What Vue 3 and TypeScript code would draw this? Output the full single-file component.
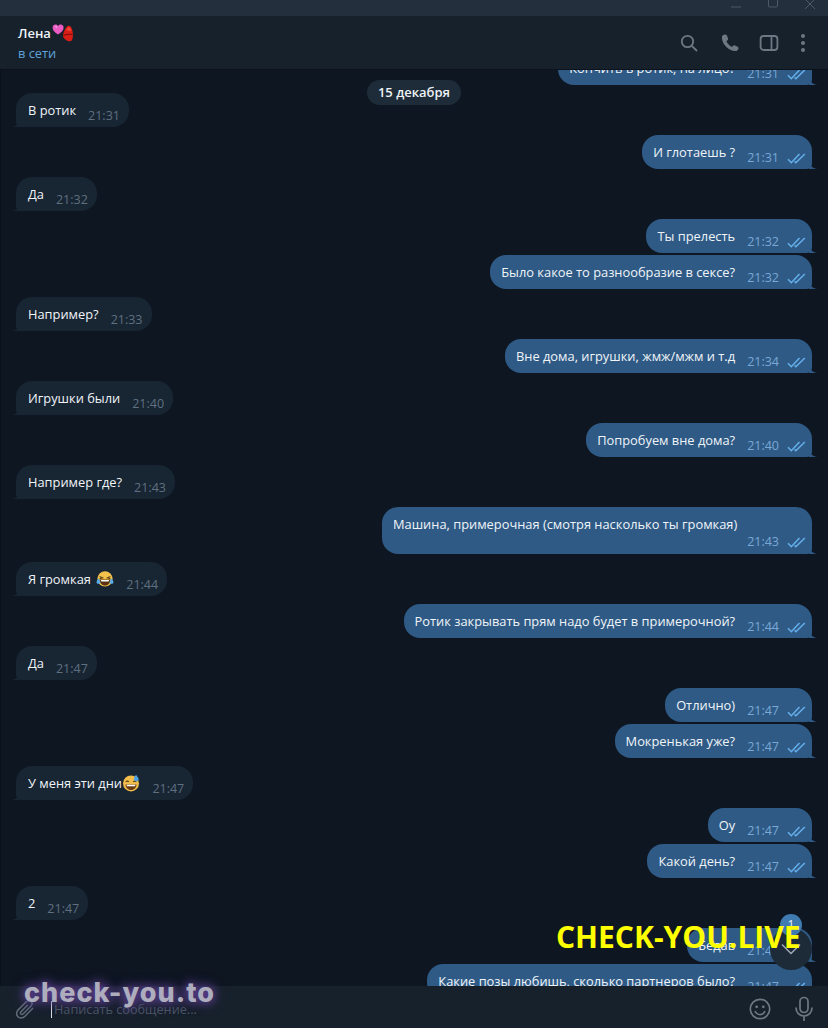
<script setup lang="ts">
type Msg = { side: 'in' | 'out'; text: string; time: string; emoji?: 'joy' | 'sweat'; wrap?: boolean; tight?: boolean; first?: boolean };

const messages: Msg[] = [
  { side: 'out', text: 'Кончить в ротик, на лицо?', time: '21:31', first: true },
  { side: 'in', text: 'В ротик', time: '21:31' },
  { side: 'out', text: 'И глотаешь ?', time: '21:31' },
  { side: 'in', text: 'Да', time: '21:32' },
  { side: 'out', text: 'Ты прелесть', time: '21:32' },
  { side: 'out', text: 'Было какое то разнообразие в сексе?', time: '21:32', tight: true },
  { side: 'in', text: 'Например?', time: '21:33' },
  { side: 'out', text: 'Вне дома, игрушки, жмж/мжм и т.д', time: '21:34' },
  { side: 'in', text: 'Игрушки были', time: '21:40' },
  { side: 'out', text: 'Попробуем вне дома?', time: '21:40' },
  { side: 'in', text: 'Например где?', time: '21:43' },
  { side: 'out', text: 'Машина, примерочная (смотря насколько ты громкая)', time: '21:43', wrap: true },
  { side: 'in', text: 'Я громкая', time: '21:44', emoji: 'joy' },
  { side: 'out', text: 'Ротик закрывать прям надо будет в примерочной?', time: '21:44' },
  { side: 'in', text: 'Да', time: '21:47' },
  { side: 'out', text: 'Отлично)', time: '21:47' },
  { side: 'out', text: 'Мокренькая уже?', time: '21:47', tight: true },
  { side: 'in', text: 'У меня эти дни', time: '21:47', emoji: 'sweat' },
  { side: 'out', text: 'Оу', time: '21:47' },
  { side: 'out', text: 'Какой день?', time: '21:47', tight: true },
  { side: 'in', text: '2', time: '21:47' },
  { side: 'out', text: 'Бедав', time: '21:47' },
  { side: 'out', text: 'Какие позы любишь, сколько партнеров было?', time: '21:47', tight: true },
];
</script>

<template>
  <div class="window">
    <div class="titlebar">
      <svg class="win-icon" viewBox="0 0 12 12"><path d="M1 7h10" /></svg>
      <svg class="win-icon" viewBox="0 0 12 12"><rect x="1.5" y="-2" width="9" height="9" rx="1" /></svg>
      <svg class="win-icon" viewBox="0 0 12 12"><path d="M1 -1l10 10M11 -1L1 9" /></svg>
    </div>

    <header class="header">
      <div class="who">
        <div class="name">
          <span>Лена</span>
          <svg class="name-emoji" viewBox="0 0 22 18">
            <path d="M6 10.5C3 8.5 .6 6.6.6 3.8.6 1.8 2 .6 3.6.6c1.1 0 2 .6 2.5 1.5C6.600 1.200 7.500.6 8.600.6c1.600 0 3 1.200 3 3.200 0 2.800-2.600 4.700-5.600 6.700z" fill="#ea5bc4" />
            <path d="M3 2.200c.8-.5 1.800-.3 2.300.5L4.500 4.200z" fill="#f6a6e2" />
            <path d="M14.500 3c1.400-1.500 3.300-1.400 4.100-.5 1.200 1 1.900 3.700 2.300 7 .2 2.400 0 5-1 6.700-1 1.200-3.300 1.300-5.200.4-2-1-3.300-2.800-3.800-4.500.2-2.500 1.600-6.400 3.600-9.100z" fill="#d81e17" />
            <path d="M11.500 11.500c2.500-1 5.500-1.500 9.300-1" fill="none" stroke="#7a0d0c" stroke-width="1.100" />
            <path d="M15.500 4c1-.6 2-.6 2.700.2.500 1 .6 2 .7 3-1.300-.8-2.800-1-4.300-.6z" fill="#f04a3c" />
          </svg>
        </div>
        <div class="status">в сети</div>
      </div>
      <div class="actions">
        <svg class="act a-search" viewBox="0 0 20 20"><circle cx="8.500" cy="8.500" r="5.700" /><path d="M12.800 12.800l5.200 5.200" /></svg>
        <svg class="act a-phone" viewBox="0 0 20 20"><path class="fill" d="M4.500 1.500c-1.500.3-2.700 1.500-2.600 3.200.3 6.700 6.600 13.100 13.400 13.400 1.700.1 2.900-1.100 3.200-2.600.1-.8-.3-1.300-.9-1.700l-2.600-1.400c-.8-.4-1.500-.2-2 .4l-.9 1.100c-2.500-1.100-4.600-3.200-5.700-5.700l1.100-.9c.6-.5.8-1.200.4-2L7 2.400c-.5-.7-1.600-1.100-2.500-.9z" /></svg>
        <svg class="act a-side" viewBox="0 0 20 20"><rect x="1.600" y="3" width="16.800" height="14" rx="3" /><path d="M12.500 3v14" /></svg>
        <span class="dots"><i /><i /><i /></span>
      </div>
    </header>

    <main class="chat">
      <div class="feed">
        <div
          v-for="(m, i) in messages"
          :key="i"
          class="row"
          :class="[m.side, { tight: m.tight, first: m.first }]"
        >
          <div class="bubble" :class="{ wrap: m.wrap }">
            <div class="text">
              {{ m.text }}
              <svg v-if="m.emoji === 'joy'" class="emoji joy" viewBox="0 0 18 18">
                <circle cx="9" cy="8.800" r="7.600" fill="#f3c24c" />
                <path d="M3.600 6.500l3 1.300-3 .9M14.400 6.500l-3 1.300 3 .9" fill="none" stroke="#5d4412" stroke-width="1.100" />
                <path d="M3.500 9.500h11c0 3.500-2.400 6-5.500 6s-5.500-2.500-5.500-6z" fill="#5b3210" />
                <path d="M4.800 10h8.400l-.6 1.600H5.400z" fill="#fff" />
                <path d="M2.800 8.500C1.500 10 .3 11.200.6 12.700c.3 1.300 2.800 1.500 4-.2zM15.200 8.500c1.300 1.500 2.500 2.700 2.200 4.200-.3 1.300-2.800 1.500-4-.2z" fill="#58aeec" />
              </svg>
              <svg v-else-if="m.emoji === 'sweat'" class="emoji sweat" viewBox="0 0 18 18">
                <circle cx="9" cy="9.400" r="8" fill="#f2bd4b" />
                <path d="M3.800 7.800c.8-1 2.200-1 3 0M11.200 7.800c.8-1 2.200-1 3 0" fill="none" stroke="#5d4412" stroke-width="1.200" />
                <path d="M3.500 10.500h11c0 3-2.400 5.500-5.500 5.500s-5.500-2.500-5.500-5.500z" fill="#6b3d12" />
                <path d="M4.500 10.800h9l-.5 1.500H5z" fill="#fff" />
                <path d="M14 .8c.8 1.500 2.700 2.800 2.700 4.300a2.400 2.400 0 0 1-4.800 0c0-1.200.9-2.800 2.100-4.300z" fill="#4fa3e3" />
              </svg>
            </div>
            <div class="meta">
              <span class="time">{{ m.time }}</span>
              <svg v-if="m.side === 'out'" class="checks" viewBox="0 0 19 11">
                <path d="M1 6.300l3.300 3.400L12.500 1M7.600 8.400l1.300 1.300L17.800 1" />
              </svg>
            </div>
          </div>
        </div>
      </div>

      <div class="date">15 декабря</div>

      <div class="to-bottom">
        <svg viewBox="0 0 20 12"><path d="M1 1.500l9 9 9-9" /></svg>
        <span class="badge">1</span>
      </div>
      <div class="mark-live">CHECK-YOU.LIVE</div>
    </main>

    <footer class="composer">
      <svg class="clip" viewBox="0 0 22 22">
        <path d="M19 10l-8 8.200c-2.200 2.200-5.300 2.300-7.100.5-1.800-1.800-1.700-4.900.5-7.100l7.900-7.900c1.500-1.400 3.500-1.500 4.800-.3 1.300 1.300 1.200 3.300-.3 4.800l-7.500 7.600c-.8.700-1.800.8-2.400.2-.6-.6-.5-1.600.2-2.400L13.800 7" />
      </svg>
      <span class="caret" />
      <span class="placeholder">Написать сообщение...</span>
      <svg class="smile" viewBox="0 0 22 22">
        <circle cx="11" cy="11" r="9.700" />
        <circle class="fill" cx="7.700" cy="8.800" r="1.400" />
        <circle class="fill" cx="14.300" cy="8.800" r="1.400" />
        <path d="M6 13c1 2.400 2.900 3.600 5 3.600s4-1.200 5-3.600" />
      </svg>
      <svg class="mic" viewBox="0 0 20 26">
        <rect x="6" y="1.500" width="8" height="15" rx="4" />
        <path d="M2 11.500c0 5 3.500 8.500 8 8.500s8-3.500 8-8.500M10 20v5" />
      </svg>
    </footer>

    <div class="mark-to">check-you.to</div>
  </div>
</template>

<style>
html,
body {
  margin: 0;
  background: #0e1621;
}
</style>

<style scoped>
.window {
  position: relative;
  width: 828px;
  height: 1028px;
  display: flex;
  flex-direction: column;
  overflow: hidden;
  background: #0e1621;
  color: #f0f4f8;
  font-family: "Open Sans", "Noto Sans", sans-serif;
  font-size: 12.850px;
}
.titlebar {
  flex: 0 0 16px;
  display: flex;
  justify-content: flex-end;
  gap: 25px;
  padding-right: 12px;
  background: #242f3d;
  overflow: hidden;
}
.win-icon {
  width: 12px;
  height: 12px;
  fill: none;
  stroke: #4d5966;
  stroke-width: 1;
}
.header {
  flex: 0 0 54px;
  display: flex;
  justify-content: space-between;
  align-items: flex-start;
  padding: 0 18px;
  background: #17212b;
  border-bottom: 1px solid #0b121a;
  box-sizing: border-box;
  z-index: 2;
}
.name {
  display: flex;
  align-items: center;
  height: 18px;
  margin-top: 8px;
  font-size: 13px;
  font-weight: 600;
  color: #f0f4f8;
}
.name-emoji {
  width: 22px;
  height: 18px;
  margin-left: 1px;
}
.status {
  margin-top: 2px;
  line-height: 18px;
  color: #5fa3d9;
}
.actions {
  display: flex;
  align-items: center;
  height: 53px;
  margin-right: 5px;
}
.act {
  fill: none;
  stroke: #6d7883;
  stroke-width: 1.800;
}
.act .fill {
  fill: #6d7883;
  stroke: none;
}
.a-search {
  width: 20px;
  height: 20px;
}
.a-phone {
  width: 20px;
  height: 20px;
  margin-left: 21px;
}
.a-side {
  width: 20px;
  height: 20px;
  margin-left: 19px;
}
.dots {
  display: flex;
  flex-direction: column;
  gap: 3px;
  margin-left: 22px;
}
.dots i {
  width: 4px;
  height: 4px;
  border-radius: 50%;
  background: #6d7883;
}
.chat {
  position: relative;
  flex: 1;
  min-height: 0;
  overflow: hidden;
  border-left: 1px solid #0a1119;
  box-sizing: border-box;
}
.feed {
  display: flex;
  flex-direction: column;
  margin-top: -19px;
  padding: 0 16px 0 15px;
}
.row {
  display: flex;
  margin-top: 8px;
}
.row.first {
  margin-top: 0;
}
.row.tight {
  margin-top: 2px;
}
.row.out {
  justify-content: flex-end;
}
.bubble {
  position: relative;
  display: flex;
  align-items: flex-start;
  box-sizing: border-box;
  height: 34px;
  padding: 8px 9px 8px 12px;
  line-height: 18px;
}
.in .bubble {
  background: #182533;
  border-radius: 16px 16px 16px 5px;
}
.out .bubble {
  background: #2e5a85;
  border-radius: 16px 16px 5px 16px;
  padding-left: 11px;
  padding-right: 6px;
}
.bubble::after {
  content: "";
  position: absolute;
  bottom: 0;
  width: 9px;
  height: 9px;
}
.in .bubble::after {
  left: -5px;
  background: radial-gradient(circle at 0 0, transparent 8.500px, #182533 9.500px);
}
.out .bubble::after {
  right: -6px;
  background: radial-gradient(circle at 100% 0, transparent 8.500px, #2e5a85 9.500px);
}
.bubble.wrap {
  flex-direction: column;
  align-items: stretch;
  width: 430px;
  height: 47px;
}
.text {
  white-space: nowrap;
  color: #f0f4f8;
}
.emoji {
  display: inline-block;
  width: 18px;
  height: 18px;
  vertical-align: -4px;
}
.emoji.joy {
  margin-left: 2px;
}
.emoji.sweat {
  margin-left: -3px;
}
.meta {
  display: flex;
  align-items: center;
  margin: 6px 0 -6px 12px;
  line-height: 18px;
}
.wrap .meta {
  justify-content: flex-end;
  margin: 0;
}
.time {
  font-size: 12.500px;
  color: #5f7080;
}
.out .time {
  color: #7aa8d6;
}
.checks {
  width: 19px;
  height: 11px;
  margin-left: 8px;
  fill: none;
  stroke: #64aeea;
  stroke-width: 1.600;
}
.date {
  position: absolute;
  top: 10px;
  left: 366px;
  width: 94px;
  height: 25px;
  border-radius: 13px;
  background: #1e2c3a;
  text-align: center;
  line-height: 24px;
  font-size: 13px;
  font-weight: 600;
  color: #eef2f6;
}
.to-bottom {
  position: absolute;
  left: 769px;
  top: 858px;
  width: 42px;
  height: 42px;
  border-radius: 50%;
  background: #1d2a38;
  display: flex;
  align-items: center;
  justify-content: center;
}
.to-bottom svg {
  width: 20px;
  height: 12px;
  fill: none;
  stroke: #a0aab3;
  stroke-width: 1.500;
}
.badge {
  position: absolute;
  left: 10px;
  top: -14px;
  width: 22px;
  height: 22px;
  border-radius: 50%;
  background: #3f7ab0;
  text-align: center;
  font-size: 12px;
  line-height: 22px;
  color: #eaf2f8;
}
.mark-live {
  position: absolute;
  left: 555px;
  top: 847px;
  font-size: 30px;
  line-height: 40px;
  font-weight: 700;
  color: #ffff00;
  white-space: nowrap;
}
.composer {
  position: relative;
  flex: 0 0 42px;
  display: flex;
  align-items: center;
  background: #17212b;
  padding: 4px 14px 0 14px;
  box-sizing: border-box;
  z-index: 2;
}
.clip {
  width: 22px;
  height: 22px;
  fill: none;
  stroke: #5f6c78;
  stroke-width: 1.500;
}
.caret {
  width: 1px;
  height: 17px;
  margin-left: 15px;
  background: #d8dee4;
}
.placeholder {
  flex: 1;
  margin-left: 2px;
  color: #4a5763;
  font-size: 12.700px;
}
.smile {
  width: 22px;
  height: 22px;
  fill: none;
  stroke: #6d7883;
  stroke-width: 1.700;
}
.smile .fill {
  fill: #6d7883;
  stroke: none;
}
.mic {
  width: 20px;
  height: 26px;
  margin-left: 23px;
  fill: none;
  stroke: #6d7883;
  stroke-width: 1.700;
}
.mark-to {
  position: absolute;
  left: 24px;
  top: 975px;
  z-index: 3;
  font-family: Inter, "Open Sans", sans-serif;
  font-size: 27px;
  line-height: 36px;
  font-weight: 800;
  letter-spacing: 1px;
  color: #adadbe;
  text-shadow: 0 0 10px #6a45a8, 0 0 14px #5a3d8a;
  white-space: nowrap;
}
</style>
